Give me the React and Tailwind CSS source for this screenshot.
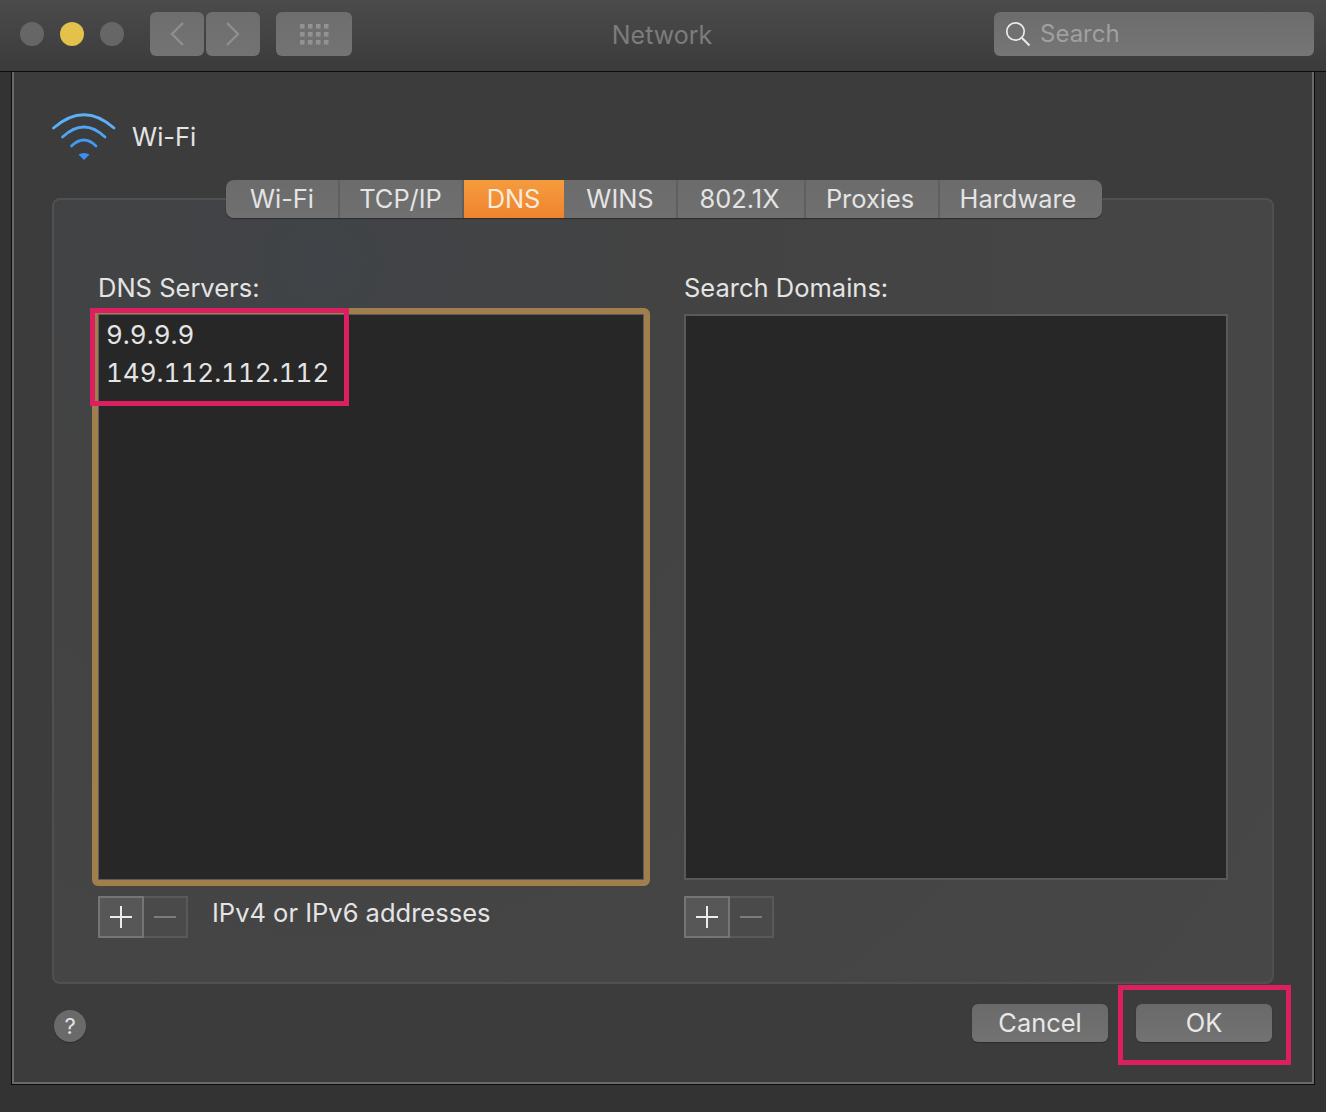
import React from "react";

function Wifi() {
  return (
    <svg width="64" height="48" viewBox="0 0 64 48" fill="none" className="shrink-0">
      <path d="M1.5 15 Q32 -11.5 62 15" stroke="#5cb0f6" strokeWidth="2.7" strokeLinecap="round" />
      <path d="M10.5 24 Q32 4 53 24" stroke="#50a6f5" strokeWidth="2.7" strokeLinecap="round" />
      <path d="M19.5 33 Q32 21 44 33" stroke="#429af4" strokeWidth="2.7" strokeLinecap="round" />
      <path d="M26.5 41.5 Q32 38.5 37.5 41.5 L32 47 Z" fill="#3a90f3" />
    </svg>
  );
}

function AddRemove() {
  return (
    <div className="flex h-[42px] w-[90px]">
      <div className="flex w-[46px] items-center justify-center border-2 border-[#757575] bg-[#575757]">
        <svg width="24" height="24" viewBox="0 0 24 24"><path d="M12 1v22M1 12h22" stroke="#ececec" strokeWidth="2" /></svg>
      </div>
      <div className="flex w-[44px] items-center justify-center border-2 border-l-0 border-[#595959] bg-[#4a4a4a]">
        <svg width="24" height="24" viewBox="0 0 24 24"><path d="M1 12h22" stroke="#7c7c7c" strokeWidth="2" /></svg>
      </div>
    </div>
  );
}

const tabs = [
  ["Wi-Fi", "w-[114px]"],
  ["TCP/IP", "w-[124px] pr-[1px]"],
  ["DNS", "w-[100px] pr-[1px]"],
  ["WINS", "w-[114px]"],
  ["802.1X", "w-[128px] pr-[3px]"],
  ["Proxies", "w-[134px] pr-[4px]"],
  ["Hardware", "w-[162px] pr-[6px]"],
];

export default function App() {
  return (
    <div className="relative h-[1112px] w-[1326px] overflow-hidden bg-[#333333] font-['Inter',_'Liberation_Sans',_sans-serif] text-[#e4e4e4]">
      {/* Title bar */}
      <header className="flex h-[72px] items-start border-b border-[#0c0c0c] bg-gradient-to-b from-[#4b4b4b] to-[#3b3b3b] pt-3">
        <div className="flex h-11 items-center gap-4 pl-5">
          <span className="size-6 rounded-full bg-[#666666]" />
          <span className="size-6 rounded-full bg-[#e3c14b]" />
          <span className="size-6 rounded-full bg-[#666666]" />
        </div>
        <div className="ml-[26px] flex h-11 gap-0.5">
          <button className="flex w-[54px] items-center justify-center rounded-md bg-gradient-to-b from-[#6e6e6e] to-[#737373]">
            <svg width="16" height="26" viewBox="0 0 16 26" fill="none"><path d="M14 2 3 13l11 11" stroke="#8f8f8f" strokeWidth="2.4" /></svg>
          </button>
          <button className="flex w-[54px] items-center justify-center rounded-md bg-gradient-to-b from-[#6e6e6e] to-[#737373]">
            <svg width="16" height="26" viewBox="0 0 16 26" fill="none"><path d="m2 2 11 11L2 24" stroke="#8f8f8f" strokeWidth="2.4" /></svg>
          </button>
        </div>
        <button className="ml-4 flex h-11 w-[76px] items-center justify-center rounded-md bg-gradient-to-b from-[#6e6e6e] to-[#737373]">
          <svg width="29" height="21" viewBox="0 0 29 21" fill="#939393">
            {[0, 8, 16].map((y) =>
              [0, 8, 16, 24].map((x) => <rect key={`${x}-${y}`} x={x} y={y} width="4.5" height="4.5" />)
            )}
          </svg>
        </button>
        <div className="flex h-11 flex-1 items-center justify-center pr-[22px] pt-[4px] text-[25px] text-[#7c7c7c]">Network</div>
        <div className="mr-3 flex h-11 w-[320px] items-center rounded-md bg-gradient-to-b from-[#6c6c6c] to-[#767676] pl-[11px]">
          <svg width="26" height="26" viewBox="0 0 26 26" fill="none"><circle cx="10.5" cy="10.5" r="8.7" stroke="#ececec" strokeWidth="1.7" /><path d="m17 17 7.5 7.5" stroke="#ececec" strokeWidth="1.9" /></svg>
          <span className="ml-[9px] text-[24px] text-[#a0a0a0]">Search</span>
        </div>
      </header>

      {/* Sheet */}
      <main className="ml-[12px] flex h-[1012px] w-[1302px] flex-col border-x-2 border-b-2 border-[#6a6a6a] bg-[#3c3c3c] pl-[38px] pr-[38px] shadow-[0_0_0_1px_#0c0c0c]">
        <div className="flex h-[126px] items-start pt-[41px]">
          <Wifi />
          <span className="ml-[16px] mt-[8px] text-[25.5px] leading-[32px]">Wi-Fi</span>
        </div>

        <section className="relative flex h-[786px] w-[1222px] flex-col rounded-lg border-2 border-[#505050] bg-[radial-gradient(circle_at_22%_8%,_#404347_0%,_#434343_30%,_#474747_100%)]">
          <nav className="-mt-[20px] ml-[172px] flex h-[38px] w-[876px] overflow-hidden rounded-lg bg-gradient-to-b from-[#6b6b6b] to-[#707070] text-[25.4px] leading-[38px] shadow-[0_1px_1px_#2c2c2c]">
            {tabs.map(([t, w]) => (
              <span
                key={t}
                className={
                  t === "DNS"
                    ? `${w} bg-gradient-to-b from-[#f59c3d] to-[#f0832f] text-center text-[#f8ecdf]`
                    : `${w} border-r-2 border-[#5f5f5f] text-center last:border-r-0`
                }
              >
                {t}
              </span>
            ))}
          </nav>

          <div className="flex pl-[38px] pt-[51px]">
            <div className="w-[558px]">
              <div className="pl-[6px] text-[25.5px] leading-[38px]">DNS Servers:</div>
              <div className="mt-[1px] h-[578px] rounded-md border-[6px] border-[#a17f4c]">
                <div className="h-full border border-[#5c5c5c] bg-[#272727] pl-[7px] pt-[1px] text-[26px] leading-[38px] tabular-nums">
                  <div>9.9.9.9</div>
                  <div>149.112.112.112</div>
                </div>
              </div>
              <div className="mt-[10px] flex pl-[6px]">
                <AddRemove />
                <span className="ml-6 text-[25.5px] leading-[34px]">IPv4 or IPv6 addresses</span>
              </div>
            </div>
            <div className="ml-[34px] w-[544px]">
              <div className="text-[25.5px] leading-[38px]">Search Domains:</div>
              <div className="mt-[7px] h-[566px] border-2 border-[#595959] bg-[#272727]" />
              <div className="mt-[16px]"><AddRemove /></div>
            </div>
          </div>
        </section>

        <footer className="flex flex-1 items-start pl-[2px] pt-[20px]">
          <span className="mt-[6px] flex size-8 items-center justify-center rounded-full bg-[#6a6a6a] text-[22px] text-[#e4e4e4] shadow-[0_1px_1px_#2c2c2c]">?</span>
          <div className="ml-auto flex gap-7 pr-[2px]">
            <button className="h-[38px] w-[136px] rounded-md bg-gradient-to-b from-[#6a6a6a] to-[#727272] text-[25.4px] text-[#e8e8e8] shadow-[0_1px_1px_#2c2c2c]">Cancel</button>
            <button className="h-[38px] w-[136px] rounded-md bg-gradient-to-b from-[#6a6a6a] to-[#727272] text-[25.4px] text-[#e8e8e8] shadow-[0_1px_1px_#2c2c2c]">OK</button>
          </div>
        </footer>
      </main>

      {/* Annotations */}
      <div className="absolute left-[90px] top-[308px] h-[98px] w-[259px] border-[5px] border-[#dc1f60]" />
      <div className="absolute left-[1118px] top-[985px] h-[80px] w-[173px] border-[5px] border-[#dc1f60]" />
    </div>
  );
}
